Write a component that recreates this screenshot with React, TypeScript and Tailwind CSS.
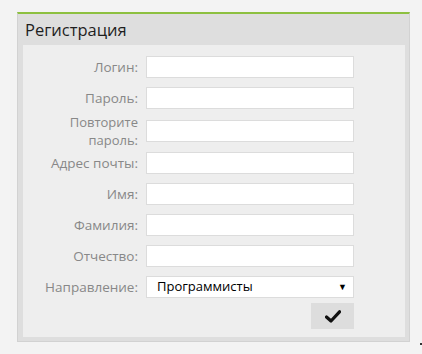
import React from 'react';

const fields: { label: React.ReactNode; tall?: boolean }[] = [
  { label: 'Логин:' },
  { label: 'Пароль:' },
  { label: <>Повторите<br />пароль:</>, tall: true },
  { label: 'Адрес почты:' },
  { label: 'Имя:' },
  { label: 'Фамилия:' },
  { label: 'Отчество:' },
];

const Row: React.FC<{ label: React.ReactNode; tall?: boolean; children: React.ReactNode }> = ({ label, tall, children }) => (
  <div className={`flex items-center gap-[8px] ${tall ? 'h-[25px]' : 'h-[22px]'}`}>
    <div className={`w-[115px] shrink-0 text-right text-[#888888] ${tall ? 'text-[13px] leading-[18px]' : 'text-[13.5px] leading-[16px]'}`}>
      {label}
    </div>
    {children}
  </div>
);

export default function App() {
  return (
    <div className="w-[422px] h-[354px] bg-[#f3f3f3] relative pt-[12px] pl-[17px] font-['Open_Sans','Noto_Sans',sans-serif]">
      <div className="w-[393px] h-[330px] bg-[#dedede] border-t-2 border-t-[#8dc040] border-x border-b border-x-[#d2d2d2] border-b-[#d2d2d2] pl-[5px] pr-[4px] pb-[4px] flex flex-col">
        <div className="h-[31px] flex items-center pl-[2px] pt-[1px]">
          <h1 className="text-[16.5px] leading-none text-[#1e1e1e]">Регистрация</h1>
        </div>
        <div className="flex-1 bg-[#eeeeee] pt-[11px] flex flex-col gap-[9px]">
          {fields.map((f, i) => (
            <Row key={i} label={f.label} tall={f.tall}>
              <input className="h-[22px] w-[208px] bg-white border border-[#dcdcdc] outline-none" />
            </Row>
          ))}
          <Row label="Направление:">
            <div className="h-[22px] w-[208px] bg-white border border-[#dcdcdc] flex items-center justify-between pl-[10px] pr-[6px]">
              <span className="text-[13px] text-black">Программисты</span>
              <span className="text-[9px] text-black">▼</span>
            </div>
          </Row>
          <div className="flex -mt-[4px] pl-[123px]">
            <div className="w-[208px] flex justify-end">
              <button className="w-[43px] h-[26px] bg-[#dddddd] flex items-center justify-center">
                <svg width="16" height="13" viewBox="0 0 16 13">
                  <path d="M1.5 7 L6 11 L14.5 1.8" fill="none" stroke="#111" strokeWidth="3.2" strokeLinecap="round" strokeLinejoin="round" />
                </svg>
              </button>
            </div>
          </div>
        </div>
      </div>
      <span className="absolute left-[420px] top-[343px] w-[2px] h-[2px] bg-[#333]" />
    </div>
  );
}
